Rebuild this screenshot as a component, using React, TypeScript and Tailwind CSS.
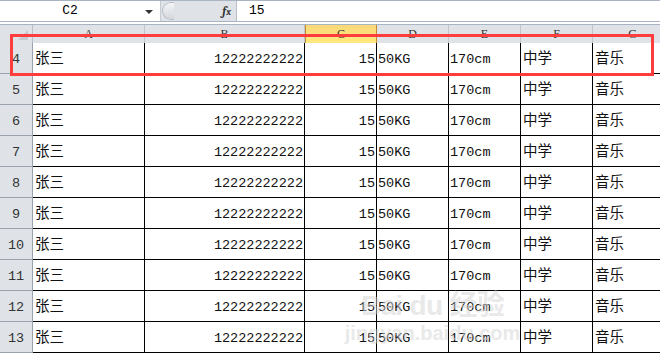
const cols = [
  { key: 'A', w: 'w-[112px]' },
  { key: 'B', w: 'w-[160px]' },
  { key: 'C', w: 'w-[72px]' },
  { key: 'D', w: 'w-[72px]' },
  { key: 'E', w: 'w-[72px]' },
  { key: 'F', w: 'w-[72px]' },
  { key: 'G', w: 'w-[80px]' },
]

const rows = [4, 5, 6, 7, 8, 9, 10, 11, 12, 13]

const cellFont = { fontFamily: '"Liberation Mono", "Noto Sans CJK SC", monospace' }

function FormulaBar() {
  return (
    <div className="flex h-[22px] border-t border-b border-[#a9b4c2] bg-white text-[13px]" style={cellFont}>
      <div className="relative flex w-[160px] items-center justify-center pr-[20px] text-black">
        C2
        <span className="absolute right-[7px] top-[9px] h-0 w-0 border-x-[4px] border-t-[4px] border-x-transparent border-t-[#333]" />
      </div>
      <div className="flex w-[76px] items-center border-l border-[#c5cbd3] bg-[#dfe3e8]">
        <div className="ml-[1px] h-[18px] w-[12px] rounded-l-full border border-r-0 border-[#b9bfc7] bg-gradient-to-b from-[#f4f5f7] to-[#d3d7dc]" />
        <span className="ml-auto mr-[5px] font-serif text-[12px] italic font-bold text-[#333]">
          f<span className="text-[10px]">x</span>
        </span>
      </div>
      <div className="flex flex-1 items-center border-l border-[#b9bfc7] pl-[12px] text-black">15</div>
    </div>
  )
}

function HeaderRow() {
  return (
    <div className="flex h-[19px] border-t border-[#a9b4c2] bg-[#dfe3e8] text-[12px] text-[#333]" style={{ fontFamily: '"Liberation Serif", serif' }}>
      <div className="relative w-[33px] shrink-0 border-r border-[#b9bfc7]">
        <span className="absolute right-[4px] bottom-[3px] h-0 w-0 border-r-[10px] border-t-[10px] border-r-[#c5cad0] border-t-transparent" />
      </div>
      {cols.map((c) => (
        <div
          key={c.key}
          className={
            c.w +
            ' shrink-0 flex items-center justify-center ' +
            (c.key === 'C'
              ? 'border-x border-[#c28a33] bg-gradient-to-b from-[#f9d878] to-[#ffe97e]'
              : 'border-r border-[#c0c6cd]')
          }
        >
          {c.key}
        </div>
      ))}
    </div>
  )
}

function DataRow({ n }: { n: number }) {
  return (
    <div className="flex h-[31px] text-[#111]" style={cellFont}>
      <div className="flex w-[33px] shrink-0 items-end justify-center border-r border-b border-[#9aa3ad] bg-[#dfe3e8] pb-[3px] text-[13.5px] text-[#333]">
        {n}
      </div>
      <div className="flex w-[112px] shrink-0 items-end border-r border-b border-black pb-[2px] pl-[2px] text-[14.5px]">
        张三
      </div>
      <div className="flex w-[160px] shrink-0 items-end justify-end border-r border-b border-black pb-[3px] pr-[1px] text-[13.5px]">
        12222222222
      </div>
      <div className="flex w-[72px] shrink-0 items-end justify-end border-r border-b border-black pb-[3px] pr-[1px] text-[13.5px]">
        15
      </div>
      <div className="flex w-[72px] shrink-0 items-end border-r border-b border-black pb-[3px] pl-[1px] text-[13.5px]">
        50KG
      </div>
      <div className="flex w-[72px] shrink-0 items-end border-r border-b border-black pb-[3px] pl-[1px] text-[13.5px]">
        170cm
      </div>
      <div className="flex w-[72px] shrink-0 items-end border-r border-b border-black pb-[2px] pl-[2px] text-[14.5px]">
        中学
      </div>
      <div className="flex w-[80px] shrink-0 items-end border-r border-b border-black pb-[2px] pl-[2px] text-[14.5px]">
        音乐
      </div>
    </div>
  )
}

export default function App() {
  return (
    <div className="relative h-[356px] w-[660px] overflow-hidden bg-white">
      <FormulaBar />
      <div className="h-[2px]" />
      <HeaderRow />
      <div className="flex flex-col">
        {rows.map((n) => (
          <DataRow key={n} n={n} />
        ))}
      </div>
      <div className="absolute left-[10px] top-[34px] h-[42px] w-[644px] border-[3px] border-[#ff3d3d]" />
      <div
        className="pointer-events-none absolute left-[305px] top-[290px] flex w-[255px] flex-col items-center text-[#d4d4d4] opacity-50"
        style={{ fontFamily: '"Liberation Sans", "Noto Sans CJK SC", sans-serif' }}
      >
        <span className="text-[28px] font-bold leading-[32px] tracking-tight">Bai du 经验</span>
        <span className="text-[20px] font-bold leading-[22px]">jingyan.baidu.com</span>
      </div>
    </div>
  )
}
